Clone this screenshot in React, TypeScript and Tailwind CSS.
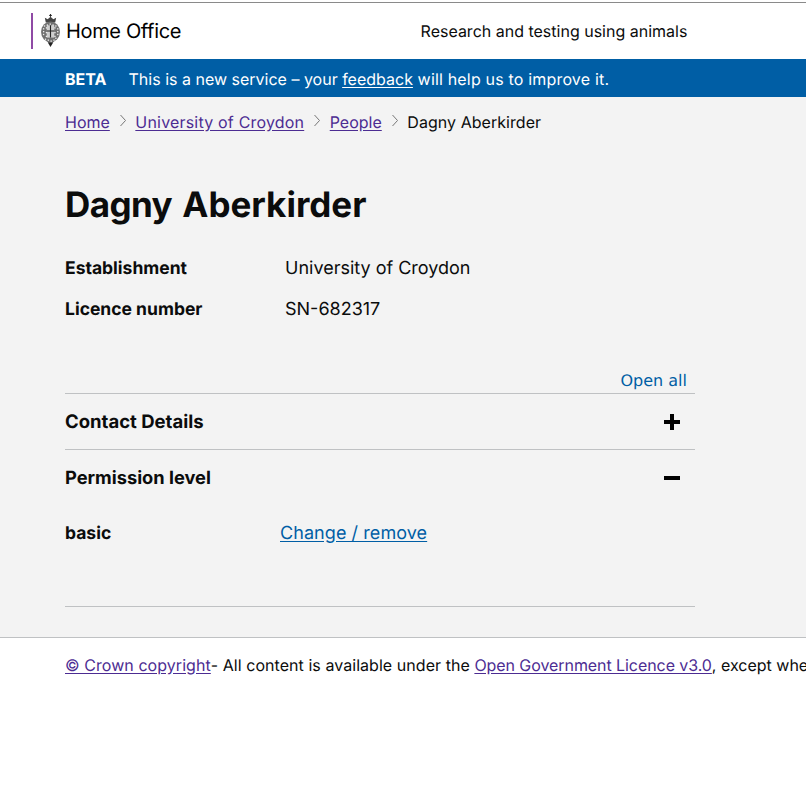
const CREST_DOTS = [
  [4, 12], [7, 11], [10, 10], [13, 11], [16, 12], [3, 15], [6, 14], [15, 14], [18, 15], [3, 18], [6, 19], [15, 19], [18, 18],
  [3, 21], [6, 23], [15, 23], [18, 21], [5, 26], [8, 27], [11, 28], [14, 27], [16, 25],
];

function Crest() {
  return (
    <svg width="21" height="34" viewBox="0 0 22 36" className="shrink-0" aria-hidden="true">
      <path d="M11 0v3M9.5 1.5h3" stroke="#222" strokeWidth="1" />
      <path d="M6 9 5 4l3 1.5L11 3l3 2.5L17 4l-1 5Z" fill="#444" />
      <ellipse cx="11" cy="19" rx="10" ry="11" fill="#707070" />
      <rect x="7" y="12" width="8" height="13" fill="#cfcfcf" />
      <path d="M11 12v13M7 18h8" stroke="#222" strokeWidth="1.2" />
      {CREST_DOTS.map(([x, y]) => (
        <rect key={`${x}-${y}`} x={x} y={y} width="1.4" height="1.4" fill="#eee" />
      ))}
      <path d="M8 30h6l-3 5Z" fill="#222" />
    </svg>
  );
}

function Chevron() {
  return (
    <svg width="8" height="13" viewBox="0 0 8 13" className="mr-[8.5px] ml-[9px] mb-[3px] shrink-0" aria-hidden="true">
      <path d="M1.5 1l5 5.5-5 5.5" fill="none" stroke="#777" strokeWidth="1" />
    </svg>
  );
}

export default function App() {
  return (
    <div className="min-h-[787px] w-[806px] overflow-hidden bg-white font-['Inter',sans-serif] text-[#0b0c0c] [text-rendering:geometricPrecision]">
      <header className="relative flex h-[59px] items-center bg-white pt-[3px]">
        <div className="absolute top-[2px] left-0 h-px w-full bg-[#8a8a8a]" />
        <div className="ml-[31px] flex h-[36px] items-center border-l-2 border-l-[#8f4aa5] pl-[7px]">
          <Crest />
          <span className="ml-[5px] text-[20px] leading-none tracking-[-0.35px] text-black">Home Office</span>
        </div>
        <span className="ml-[239.5px] text-base">Research and testing using animals</span>
      </header>

      <div className="flex h-[38px] items-center bg-[#005ea5] pt-px pl-[65px] text-base text-white">
        <strong className="mr-[22px] font-bold">BETA</strong>
        <span>
          This is a new service – your <a href="#" className="underline underline-offset-2">feedback</a>
          <span className="tracking-[0.18px]"> will help us to improve it.</span>
        </span>
      </div>

      <main className="h-[541px] border-b border-b-[#bfc1c3] bg-[#f3f3f3] pl-[65px]">
        <nav className="flex h-[50px] items-center text-base">
          <a href="#" className="text-[#4c2c92] underline underline-offset-2">Home</a>
          <Chevron />
          <a href="#" className="tracking-[0.19px] text-[#4c2c92] underline underline-offset-2">University of Croydon</a>
          <Chevron />
          <a href="#" className="text-[#4c2c92] underline underline-offset-2">People</a>
          <Chevron />
          <span className="tracking-[0.05px]">Dagny Aberkirder</span>
        </nav>

        <h1 className="mt-[35px] text-[35px] leading-[46px] font-bold [word-spacing:2px]">
          <span className="tracking-[-0.6px]">Dagny</span> Aberkirder
        </h1>

        <dl className="mt-[20px] text-[17.5px]">
          <div className="flex h-[41px] items-center">
            <dt className="w-[220px] pt-px font-bold">Establishment</dt>
            <dd className="text-lg">University of Croydon</dd>
          </div>
          <div className="flex h-[41px] items-center">
            <dt className="w-[220px] pt-px font-bold">Licence number</dt>
            <dd className="text-lg">SN-682317</dd>
          </div>
        </dl>

        <section className="mt-[39px] w-[630px]">
          <div className="flex h-[24px] items-center justify-end pr-[8px] font-['DejaVu_Sans',sans-serif] text-base text-[#005ea5]">
            Open all
          </div>
          <div className="flex h-[56px] items-center justify-between border-t border-t-[#bfc1c3] font-bold">
            <span className="pt-[2px] text-[18.5px]">Contact Details</span>
            <span className="relative mr-[15px] h-[16px] w-[16px]">
              <span className="absolute top-[6px] left-0 h-[4px] w-[16px] bg-black" />
              <span className="absolute top-0 left-[6px] h-[16px] w-[4px] bg-black" />
            </span>
          </div>
          <div className="flex h-[56px] items-center justify-between border-t border-t-[#bfc1c3] font-bold">
            <span className="pt-[2px] text-[18.25px]">Permission level</span>
            <span className="mr-[15px] h-[4px] w-[16px] bg-black" />
          </div>
          <div className="flex h-[56px] items-center pt-px">
            <span className="w-[215px] pt-px text-[17.5px] font-bold">basic</span>
            <a href="#" className="text-lg tracking-[0.07px] text-[#005ea5] underline underline-offset-2">Change / remove</a>
          </div>
          <div className="mt-[45px] border-t border-t-[#bfc1c3]" />
        </section>
      </main>

      <footer className="flex h-[55px] items-center pb-[2px] whitespace-nowrap pl-[65px] text-base">
        <a href="#" className="tracking-[0.06px] text-[#4c2c92] underline underline-offset-2">© Crown copyright</a>
        <span className="whitespace-pre tracking-[0.05px]">- All content is available under the </span>
        <a href="#" className="tracking-[-0.07px] text-[#4c2c92] underline underline-offset-2">Open Government Licence v3.0</a>
        <span>, except where otherwise stated</span>
      </footer>
    </div>
  );
}
